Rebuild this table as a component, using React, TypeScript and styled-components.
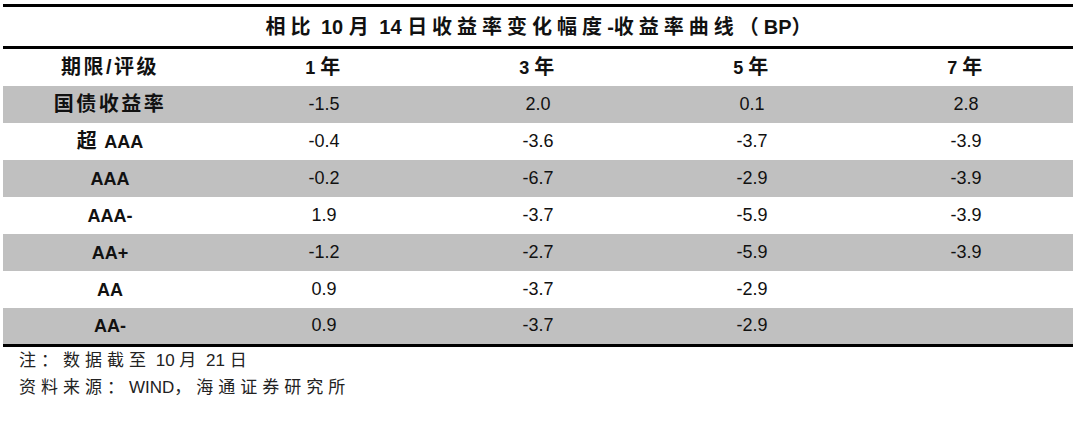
import React from 'react'
import styled, { createGlobalStyle } from 'styled-components'

const GlobalStyle = createGlobalStyle`
  body {
    margin: 0;
    background: #ffffff;
    font-family: 'Liberation Sans', 'Noto Sans CJK SC', sans-serif;
    color: #111111;
  }
`

// CJK runs are set larger and spaced out, the way the source document lays them
const Cjk = styled.span<{ $size?: number; $gap?: number }>`
  font-size: ${(p) => p.$size ?? 20}px;
  letter-spacing: ${(p) => p.$gap ?? 2.5}px;
`

const headers: React.ReactNode[] = [
  <Cjk key="h0">期限/评级</Cjk>,
  <>1 <Cjk>年</Cjk></>,
  <>3 <Cjk>年</Cjk></>,
  <>5 <Cjk>年</Cjk></>,
  <>7 <Cjk>年</Cjk></>,
]

const rows = [
  { name: <Cjk>国债收益率</Cjk>, values: ['-1.5', '2.0', '0.1', '2.8'] },
  { name: <><Cjk>超</Cjk> AAA</>, values: ['-0.4', '-3.6', '-3.7', '-3.9'] },
  { name: 'AAA', values: ['-0.2', '-6.7', '-2.9', '-3.9'] },
  { name: 'AAA-', values: ['1.9', '-3.7', '-5.9', '-3.9'] },
  { name: 'AA+', values: ['-1.2', '-2.7', '-5.9', '-3.9'] },
  { name: 'AA', values: ['0.9', '-3.7', '-2.9', ''] },
  { name: 'AA-', values: ['0.9', '-3.7', '-2.9', ''] },
]

function App() {
  return (
    <>
      <GlobalStyle />
      <Page>
        <StyledTable>
          <thead>
            <tr>
              <TitleCell colSpan={5}>
                <Cjk $gap={5}>相比</Cjk> 10 <Cjk $gap={5}>月</Cjk> 14{' '}
                <Cjk $gap={5}>日收益率变化幅度</Cjk>-<Cjk $gap={5}>收益率曲线（</Cjk>BP
                <Cjk $gap={5}>）</Cjk>
              </TitleCell>
            </tr>
            <tr>
              {headers.map((h, i) => (
                <HeadCell key={i}>{h}</HeadCell>
              ))}
            </tr>
          </thead>
          <tbody>
            {rows.map((row, i) => (
              <BodyRow key={i} $shaded={i % 2 === 0}>
                <NameCell>{row.name}</NameCell>
                {row.values.map((v, j) => (
                  <ValueCell key={j}>{v}</ValueCell>
                ))}
              </BodyRow>
            ))}
          </tbody>
        </StyledTable>
        <Notes>
          <NoteLine>
            <Cjk $size={17} $gap={5}>注：数据截至</Cjk> 10 <Cjk $size={17} $gap={5}>月</Cjk> 21{' '}
            <Cjk $size={17} $gap={5}>日</Cjk>
          </NoteLine>
          <NoteLine>
            <Cjk $size={17} $gap={5}>资料来源：</Cjk>WIND<Cjk $size={17} $gap={5}>，海通证券研究所</Cjk>
          </NoteLine>
        </Notes>
      </Page>
    </>
  )
}

const Page = styled.div`
  width: 1080px;
  height: 432px;
  padding-top: 4px;
  box-sizing: border-box;
  overflow: hidden;
`

const StyledTable = styled.table`
  margin-left: 3px;
  width: 1070px;
  border-collapse: collapse;
  table-layout: fixed;
  border-top: 3px solid #000;
  border-bottom: 3px solid #000;
`

const TitleCell = styled.th`
  height: 39px;
  padding: 0 0 0 6px;
  font-size: 20px;
  font-weight: bold;
  text-align: center;
  vertical-align: middle;
  line-height: 24px;
  border-bottom: 3px solid #000;
`

const HeadCell = styled.th`
  height: 37px;
  padding: 0;
  font-size: 18px;
  font-weight: bold;
  text-align: center;
  vertical-align: middle;
  line-height: 22px;
`

const BodyRow = styled.tr<{ $shaded: boolean }>`
  height: 37px;
  background: ${(p) => (p.$shaded ? '#c0c0c0' : '#ffffff')};
`

const NameCell = styled.td`
  padding: 0;
  font-size: 18px;
  font-weight: bold;
  text-align: center;
  vertical-align: middle;
  line-height: 22px;
`

const ValueCell = styled.td`
  padding: 0;
  font-size: 18px;
  text-align: center;
  vertical-align: middle;
`

const Notes = styled.div`
  padding-left: 19px;
`

const NoteLine = styled.div`
  font-size: 17px;
  line-height: 27px;
  color: #222;
`

export default App
